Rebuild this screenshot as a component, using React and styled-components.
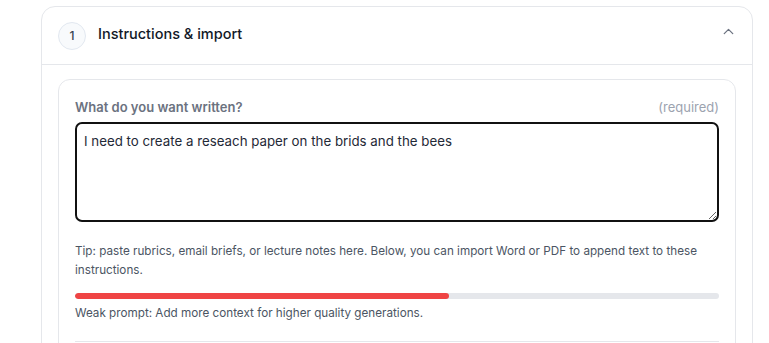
import React from 'react';
import styled, { createGlobalStyle } from 'styled-components';
import { ChevronUp } from 'lucide-react';

const GlobalStyle = createGlobalStyle`
  html, body {
    margin: 0;
    padding: 0;
    background: #ffffff;
    font-family: Inter, "Noto Sans", sans-serif;
    color: #111827;
  }
  * { box-sizing: border-box; }
`;

const Page = styled.div`
  padding: 6px 0 0 41px;
`;

const Panel = styled.section`
  width: 712px;
  border: 1px solid #e5e7eb;
  border-radius: 14px;
  background: #ffffff;
  overflow: hidden;
`;

const PanelHeader = styled.header`
  display: flex;
  align-items: center;
  height: 58px;
  padding: 0 16px;
  gap: 12px;
  border-bottom: 1px solid #e5e7eb;
`;

const StepBadge = styled.span`
  display: inline-flex;
  align-items: center;
  justify-content: center;
  width: 28px;
  height: 28px;
  border-radius: 50%;
  border: 1px solid #e2e8f0;
  background: #f8fafc;
  font-size: 12px;
  font-weight: 500;
  color: #374151;
`;

const PanelTitle = styled.h2`
  flex: 1;
  margin: 0 0 4px;
  font-size: 14.5px;
  font-weight: 500;
  color: #111827;
`;

const Toggle = styled.button`
  display: flex;
  border: 0;
  background: none;
  padding: 0;
  margin: 0 -1px 8px 0;
  color: #6b7280;
`;

const PanelBody = styled.div`
  padding: 14px 16px 0;
`;

const Field = styled.div`
  border: 1px solid #e5e7eb;
  border-radius: 12px;
  padding: 18px 16px 20px;
`;

const LabelRow = styled.div`
  display: flex;
  justify-content: space-between;
  align-items: center;
  line-height: 18px;
  margin-bottom: 6px;
`;

const Label = styled.label`
  font-size: 13px;
  font-weight: 600;
  color: #6b7280;
`;

const Hint = styled.span`
  font-size: 13px;
  color: #9ca3af;
`;

const Prompt = styled.textarea`
  display: block;
  width: 100%;
  height: 100px;
  border: 2px solid #111111;
  border-radius: 7px;
  padding: 7px 7px;
  font-family: inherit;
  font-size: 13.3px;
  line-height: 20px;
  color: #1f2937;
  resize: vertical;
  outline: none;
`;

const Tip = styled.p`
  margin: 20px 0 0;
  font-size: 11.7px;
  line-height: 19px;
  color: #4b5563;
`;

const Meter = styled.div`
  margin-top: 13px;
  height: 6px;
  border-radius: 3px;
  background: #e5e7eb;
  overflow: hidden;
`;

const MeterFill = styled.div`
  height: 100%;
  border-radius: 3px;
  background: ${(p) => p.$color};
`;

const MeterNote = styled.p`
  margin: 5px 0 0;
  font-size: 11.7px;
  line-height: 18px;
  color: #4b5563;
`;

const Divider = styled.hr`
  margin: 19px 0 0;
  border: 0;
  border-top: 1px solid #e5e7eb;
`;

export default function App() {
  const strength = 0.58;
  return (
    <Page>
      <GlobalStyle />
      <Panel>
        <PanelHeader>
          <StepBadge>1</StepBadge>
          <PanelTitle>Instructions &amp; import</PanelTitle>
          <Toggle aria-label="Collapse">
            <ChevronUp size={17} strokeWidth={1.8} />
          </Toggle>
        </PanelHeader>
        <PanelBody>
          <Field>
            <LabelRow>
              <Label>What do you want written?</Label>
              <Hint>(required)</Hint>
            </LabelRow>
            <Prompt defaultValue="I need to create a reseach paper on the brids and the bees" />
            <Tip>
              Tip: paste rubrics, email briefs, or lecture notes here. Below, you can import Word or PDF to append text to these instructions.
            </Tip>
            <Meter>
              <MeterFill $color="#ef4444" style={{ width: `${strength * 100}%` }} />
            </Meter>
            <MeterNote>Weak prompt: Add more context for higher quality generations.</MeterNote>
            <Divider />
          </Field>
        </PanelBody>
      </Panel>
    </Page>
  );
}
